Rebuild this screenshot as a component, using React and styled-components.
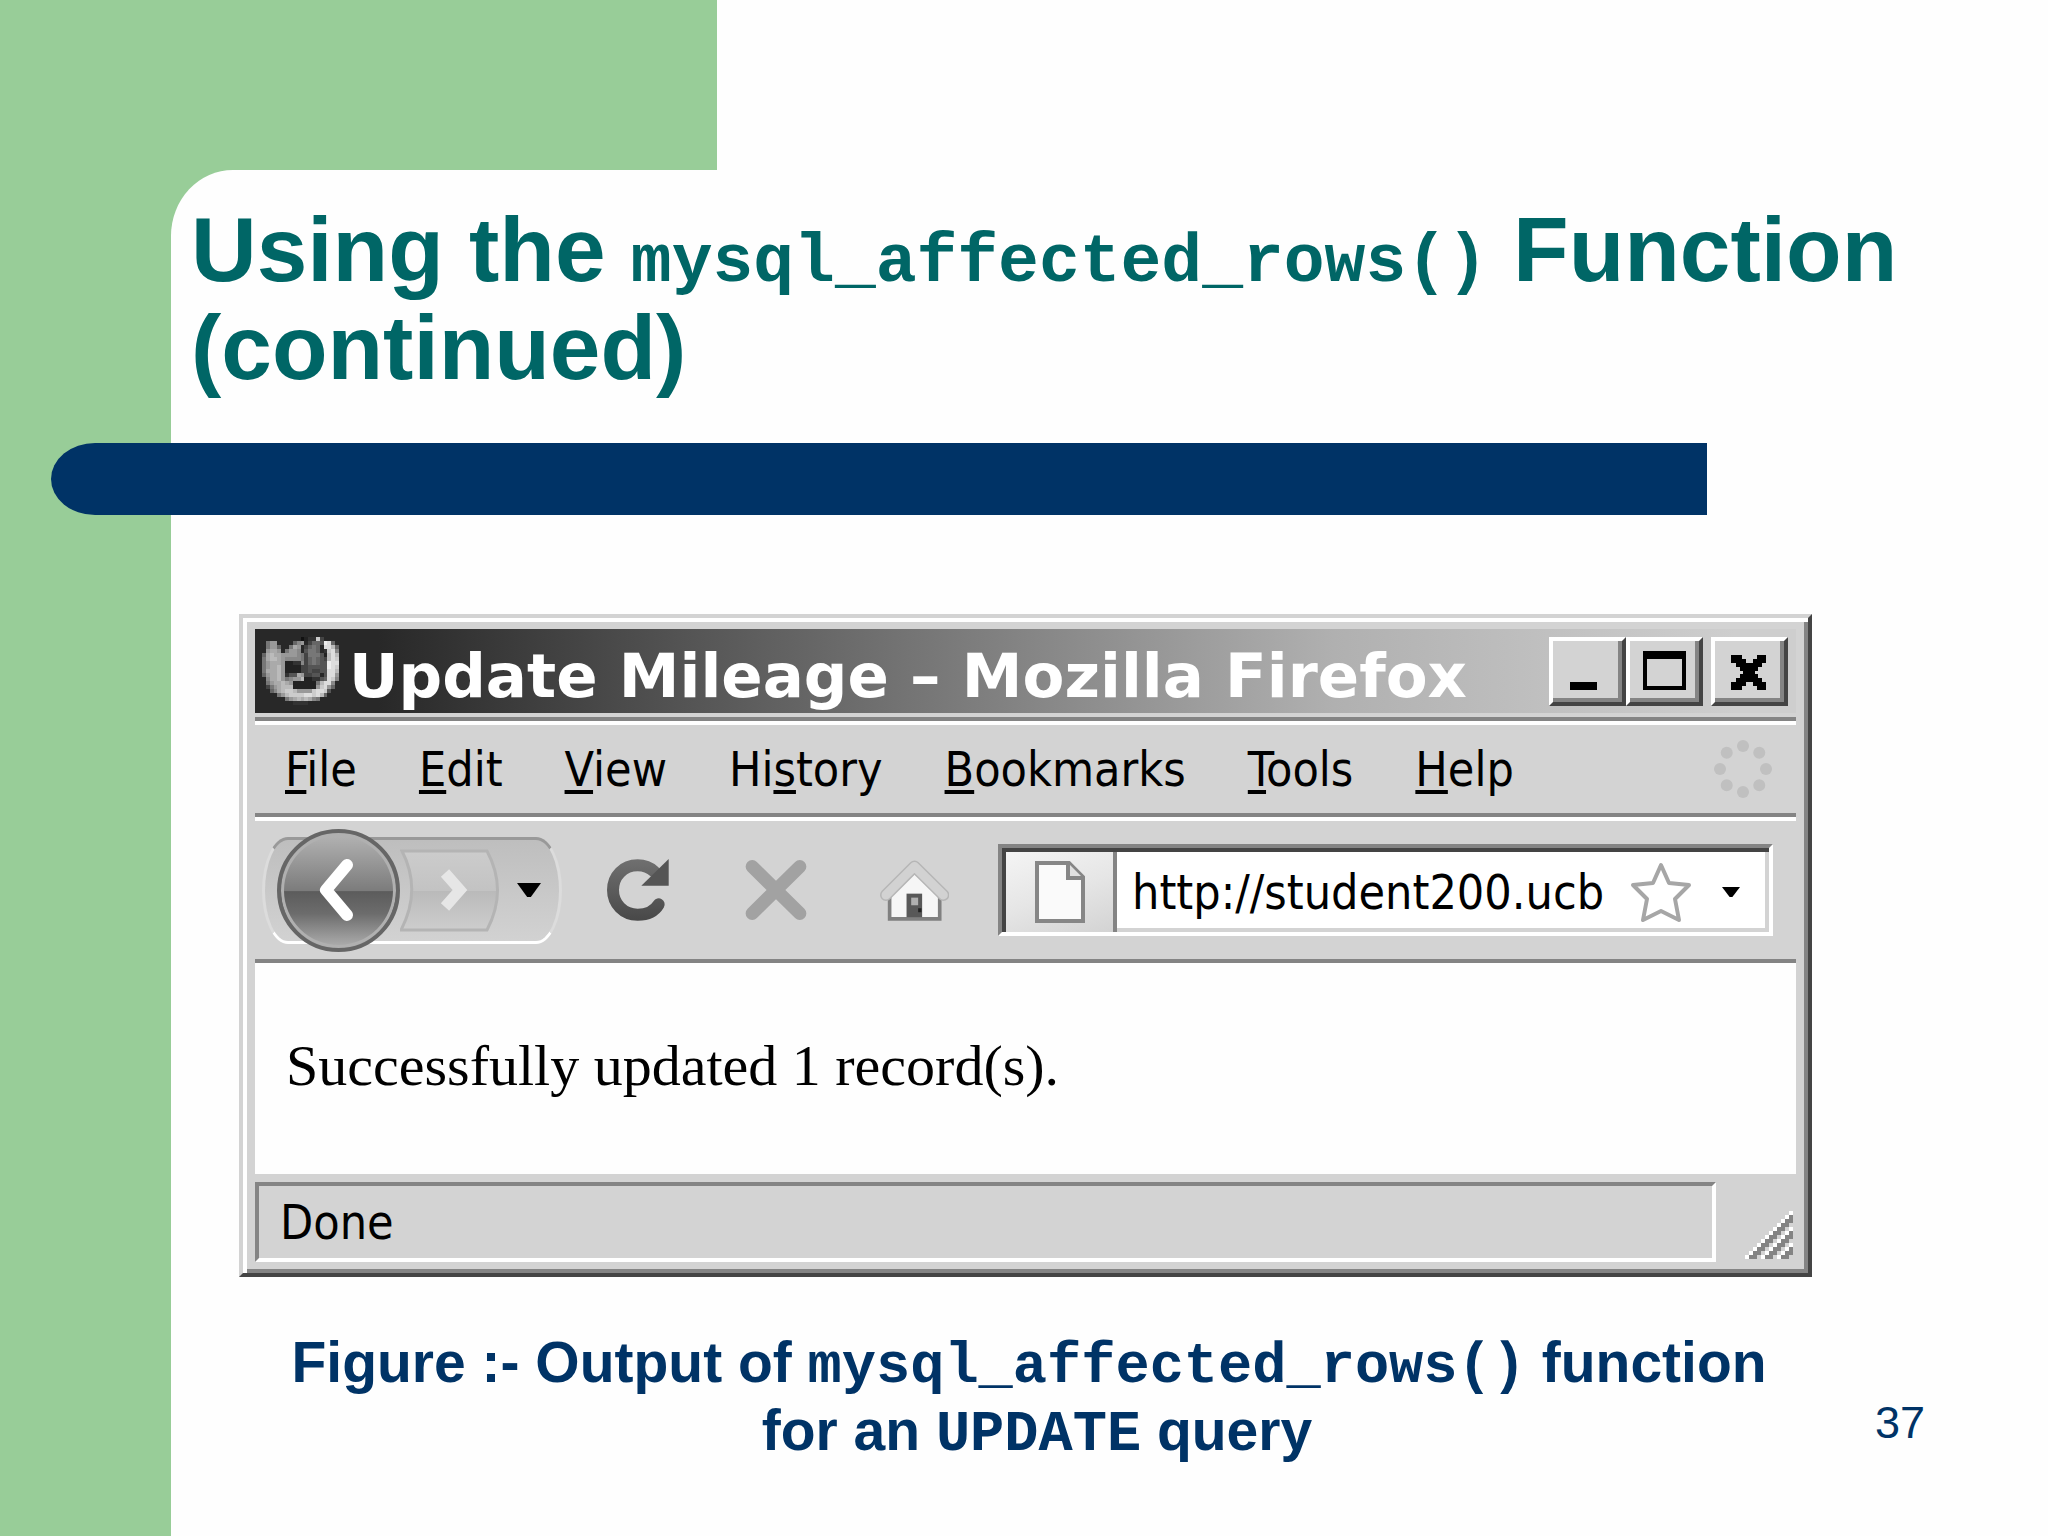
import React from "react"
import styled, { createGlobalStyle } from "styled-components"

const green = "#98cd98"
const navy = "#003366"
const teal = "#006666"
const face = "#d3d3d3"
const shade = "#848484"
const dark = "#444444"

const FIREFOX_PIXELS = [
  "..........1233c4....",
  ".799....689.4665ed6.",
  ".7996..7a9.4676.ddb6",
  ".9aa9.7998.5776.3cd8",
  "6abaa999987477752bdb",
  "7abba988887467654bdc",
  "79aaa922338467655edd",
  "79aab922224455555edc",
  "7aaab922224454455ddb",
  "69aab9355a94455.5dd9",
  ".8aab97899b223356dc8",
  ".79aaba92222227bdd8.",
  ".479abbb2222229cd96.",
  "..68abccb9999cddc5..",
  "....79bccccddcdb6...",
  "......79ababa87.....",
  "........3333........",
]

const MENU = [
  ["", "F", "ile"],
  ["", "E", "dit"],
  ["", "V", "iew"],
  ["Hi", "s", "tory"],
  ["", "B", "ookmarks"],
  ["", "T", "ools"],
  ["", "H", "elp"],
]

function FirefoxIcon() {
  return (
    <svg width="77" height="68" viewBox="0 0 20 17" preserveAspectRatio="none" shapeRendering="crispEdges">
      {FIREFOX_PIXELS.map((row, y) =>
        row.split("").map((c, x) =>
          c === "." ? null : (
            <rect key={`${x}-${y}`} x={x} y={y} width="1" height="1" fill={`#${c}${c}${c}`} />
          )
        )
      )}
    </svg>
  )
}

function MinimizeIcon() {
  return (
    <svg width="44" height="40" viewBox="0 0 44 40" shapeRendering="crispEdges">
      <rect x="4" y="31" width="27" height="8" />
    </svg>
  )
}

function MaximizeIcon() {
  return (
    <svg width="44" height="40" viewBox="0 0 44 40" shapeRendering="crispEdges">
      <path d="M0 0H43V39H0ZM4 8V35H39V8Z" fillRule="evenodd" />
    </svg>
  )
}

function CloseIcon() {
  return (
    <svg width="44" height="40" viewBox="0 0 44 40" shapeRendering="crispEdges">
      <path d="M3 4H14V8H18V12H25V8H29V4H38V12H34V16H30V20H27V23H30V27H34V31H38V39H29V35H25V31H18V35H14V39H3V31H8V27H12V23H15V20H12V16H8V12H3Z" />
    </svg>
  )
}

function Throbber() {
  const dots = [0, 1, 2, 3, 4, 5, 6, 7]
  return (
    <svg width="64" height="64" viewBox="-32 -32 64 64">
      {dots.map((i) => (
        <circle key={i} cx="0" cy="-23" r="6" fill="#c0c0c0" transform={`rotate(${i * 45})`} />
      ))}
    </svg>
  )
}

function BackArrow() {
  return (
    <svg width="40" height="64" viewBox="0 0 40 64">
      <path d="M28 7L7 32L28 57" fill="none" stroke="#fff" strokeWidth="12" strokeLinecap="round" strokeLinejoin="round" />
    </svg>
  )
}

function ForwardShape() {
  return (
    <svg width="100" height="83" viewBox="0 0 100 83">
      <defs>
        <linearGradient id="forward" x1="0" y1="0" x2="0" y2="1">
          <stop offset="0" stopColor="#cccccc" />
          <stop offset="0.5" stopColor="#c3c3c3" />
          <stop offset="0.51" stopColor="#bababa" />
          <stop offset="1" stopColor="#cdcdcd" />
        </linearGradient>
      </defs>
      <path d="M2 2H87Q108 41 87 81H1Q22 41 2 2Z" fill="url(#forward)" stroke="#b4b4b4" strokeWidth="3" />
      <path d="M45 24L60 41L45 58" fill="none" stroke="#e6e6e6" strokeWidth="11" />
    </svg>
  )
}

function ReloadIcon() {
  return (
    <svg width="62" height="62" viewBox="50 58 186 186">
      <defs>
        <linearGradient id="reload" x1="0" y1="58" x2="0" y2="243" gradientUnits="userSpaceOnUse">
          <stop offset="0" stopColor="#707070" />
          <stop offset="1" stopColor="#484848" />
        </linearGradient>
      </defs>
      <path d="M205 194C192 216 168 225 142 225C99 225 68 192 68 151C68 109 99 77 142 77C161 77 178 83 192 96" fill="none" stroke="url(#reload)" strokeWidth="36" strokeLinecap="round" />
      <path d="M235 58V138H153Z" fill="#555555" />
    </svg>
  )
}

function StopIcon() {
  return (
    <svg width="62" height="62" viewBox="464 58 188 186">
      <path d="M486 80L630 222M630 80L486 222" fill="none" stroke="#a2a2a2" strokeWidth="40" strokeLinecap="round" />
    </svg>
  )
}

function HomeIcon() {
  return (
    <svg width="69" height="62" viewBox="868 58 208 186">
      <path d="M897 160V238H1048V160L972 96Z" fill="#f6f6f6" stroke="#808080" strokeWidth="11" />
      <path d="M886 166L972 80L1059 166" fill="none" stroke="#b6b6b6" strokeWidth="36" strokeLinecap="round" strokeLinejoin="round" />
      <path d="M886 166L972 80L1059 166" fill="none" stroke="#d2d2d2" strokeWidth="27" strokeLinecap="round" strokeLinejoin="round" />
      <path d="M948 162H995V233H948Z" fill="#585858" />
      <path d="M962 174H983V197H962Z" fill="#b0b0b0" />
      <path d="M983 206H993V218H983Z" fill="#222222" />
    </svg>
  )
}

function PageIcon() {
  return (
    <svg width="50" height="62" viewBox="0 0 50 62">
      <path d="M2 2H34L48 16V60H2Z" fill="#fafafa" stroke="#868686" strokeWidth="4" />
      <path d="M33 2V17H48" fill="#e0e0e0" stroke="#868686" strokeWidth="4" />
    </svg>
  )
}

function StarIcon() {
  return (
    <svg width="64" height="64" viewBox="0 0 64 64">
      <path d="M32 5L40 23L60 25L46 39L50 60L32 51L14 60L18 39L4 25L24 23Z" fill="#fff" stroke="#a6a6a6" strokeWidth="4" strokeLinejoin="round" />
    </svg>
  )
}

function Triangle({ width, height }) {
  return (
    <svg width={width} height={height} viewBox="0 0 26 14" preserveAspectRatio="none">
      <path d="M0 0H26L15 14H11Z" />
    </svg>
  )
}

function ResizeGrip() {
  const cells = []
  for (let y = 0; y < 12; y++) {
    for (let x = 0; x < 12; x++) {
      const d = x + y - 11
      if (d < 0 || d > 10 || d % 4 === 3) continue
      cells.push(<rect key={`${x}-${y}`} x={x} y={y} width="1" height="1" fill={d % 4 === 0 ? "#fff" : shade} />)
    }
  }
  return (
    <svg width="48" height="48" viewBox="0 0 12 12" shapeRendering="crispEdges">
      {cells}
    </svg>
  )
}

export default function App() {
  return (
    <Slide>
      <GlobalStyle />
      <Header>
        <Title>
          Using the <Code $size={68}>mysql_affected_rows()</Code> Function (continued)
        </Title>
      </Header>
      <Rule />
      <Window>
        <TitleBar>
          <FirefoxIcon />
          <WindowTitle>Update Mileage – Mozilla Firefox</WindowTitle>
          <WindowButton aria-label="Minimize"><MinimizeIcon /></WindowButton>
          <WindowButton aria-label="Maximize"><MaximizeIcon /></WindowButton>
          <WindowButton aria-label="Close" $apart><CloseIcon /></WindowButton>
        </TitleBar>
        <MenuBar>
          {MENU.map(([before, key, after]) => (
            <MenuButton key={before + key + after}>
              {before}<AccessKey>{key}</AccessKey>{after}
            </MenuButton>
          ))}
          <Busy><Throbber /></Busy>
        </MenuBar>
        <Toolbar>
          <NavGroup>
            <BackButton aria-label="Back"><BackArrow /></BackButton>
            <PlainButton aria-label="Forward" $width={100}><ForwardShape /></PlainButton>
            <PlainButton aria-label="Recent pages" $width={58}><Triangle width={24} height={14} /></PlainButton>
          </NavGroup>
          <PlainButton aria-label="Reload" $width={138}><ReloadIcon /></PlainButton>
          <PlainButton aria-label="Stop" $width={138}><StopIcon /></PlainButton>
          <PlainButton aria-label="Home" $width={138}><HomeIcon /></PlainButton>
          <AddressBox>
            <SiteIcon><PageIcon /></SiteIcon>
            <Address aria-label="Address" defaultValue="http://student200.ucb" />
            <PlainButton aria-label="Bookmark this page" $width={64}><StarIcon /></PlainButton>
            <PlainButton aria-label="Show history" $width={76}><Triangle width={18} height={10} /></PlainButton>
          </AddressBox>
        </Toolbar>
        <Page>Successfully updated 1 record(s).</Page>
        <StatusBar>
          <Status>Done</Status>
          <Grip><ResizeGrip /></Grip>
        </StatusBar>
      </Window>
      <Footer>
        <Caption>
          Figure :- Output of <Code $size={57}>mysql_affected_rows()</Code> function&nbsp;
          <br />
          for an <Code $size={57}>UPDATE</Code> query
        </Caption>
        <PageNumber>37</PageNumber>
      </Footer>
    </Slide>
  )
}

const GlobalStyle = createGlobalStyle`
  * {
    box-sizing: border-box;
  }
  body {
    margin: 0;
    background: #fff;
  }
  svg {
    display: block;
    flex: none;
  }
`

const Slide = styled.main`
  min-height: 100vh;
  background: linear-gradient(to right, ${green} 171px, #fefefe 171px);
  font-family: "Liberation Sans", Arial, sans-serif;
`

const Header = styled.header`
  padding: 170px 0 0 171px;
  background: linear-gradient(to right, ${green} 35%, #fefefe 35%);
`

const Title = styled.h1`
  margin: 0;
  padding: 31px 120px 46px 20px;
  border-top-left-radius: 62px 66px;
  background: #fefefe;
  color: ${teal};
  font-size: 91px;
  line-height: 98px;
`

const Code = styled.code`
  font-family: "Liberation Mono", "Courier New", monospace;
  font-size: ${(p) => p.$size}px;
  line-height: 1;
`

const Rule = styled.div`
  height: 72px;
  margin: 0 341px 0 51px;
  border-radius: 44px 0 0 44px / 36px 0 0 36px;
  background: ${navy};
`

const Window = styled.section`
  margin: 99px 236px 0 239px;
  padding: 11px 12px;
  border: 4px solid;
  border-color: ${face} ${dark} ${dark} ${face};
  background: ${face};
  box-shadow: inset 4px 4px #fff, inset -4px -4px ${shade};
  color: #000;
  font-family: "DejaVu Sans Condensed", "DejaVu Sans", Tahoma, sans-serif;
  font-size: 48px;
`

const TitleBar = styled.div`
  display: flex;
  align-items: center;
  height: 84px;
  margin-bottom: 4px;
  padding: 0 8px 0 7px;
  background: linear-gradient(to right, #282828 8%, #737373 42%, #b0b0b0 70%, #cecece 96%);
`

const WindowTitle = styled.h2`
  flex: 1;
  margin: 0;
  padding: 8px 0 0 10px;
  color: #fff;
  font-family: "DejaVu Sans", Verdana, sans-serif;
  font-size: 61px;
  white-space: nowrap;
`

const Button = styled.button`
  display: flex;
  justify-content: center;
  align-items: center;
  flex: none;
  padding: 0;
  border: 0;
  background: none;
  color: #000;
  font: inherit;
`

const WindowButton = styled(Button)`
  width: 77px;
  height: 69px;
  margin-left: ${(p) => (p.$apart ? 8 : 0)}px;
  border: 4px solid;
  border-color: #fff ${dark} ${dark} #fff;
  background: ${face};
  box-shadow: inset -4px -4px ${shade};
`

const MenuBar = styled.nav`
  display: flex;
  align-items: center;
  gap: 62px;
  height: 96px;
  padding: 3px 21px 0 30px;
  border-top: 4px solid ${shade};
  box-shadow: inset 0 4px #fff;
`

const MenuButton = styled(Button)`
  display: block;
  white-space: nowrap;
`

const AccessKey = styled.span`
  text-decoration: underline;
  text-decoration-thickness: 4px;
  text-decoration-skip-ink: none;
  text-underline-offset: 4px;
`

const Busy = styled.div`
  margin-left: auto;
`

const Toolbar = styled.div`
  display: flex;
  align-items: center;
  height: 150px;
  padding: 4px 23px 0 7px;
  border-top: 4px solid ${shade};
  border-bottom: 4px solid ${shade};
  box-shadow: inset 0 4px #fff;
`

const NavGroup = styled.div`
  display: flex;
  align-items: center;
  width: 300px;
  height: 107px;
  margin-right: 7px;
  padding-left: 12px;
  border: 3px solid;
  border-color: #999 #dcdcdc #fff #dcdcdc;
  border-radius: 26px / 50%;
  background: linear-gradient(#bebebe, #d2d2d2);
`

const PlainButton = styled(Button)`
  width: ${(p) => p.$width}px;
`

const BackButton = styled(Button)`
  width: 123px;
  height: 123px;
  border: 4px solid #666;
  border-radius: 50%;
  background: linear-gradient(#b4b4b4, #7c7c7c 50%, #5c5c5c 51%, #6c6c6c 70%, #b0b0b0);
  box-shadow: inset 0 0 0 3px #b0b0b0;
`

const AddressBox = styled.div`
  display: flex;
  align-items: center;
  flex: 1;
  min-width: 0;
  height: 92px;
  margin-left: 15px;
  padding: 4px 0 0 4px;
  border: 4px solid;
  border-color: ${shade} #fff #fff ${shade};
  background: #fff;
  box-shadow: inset 4px 4px ${dark}, inset -4px -4px ${face};
`

const SiteIcon = styled.div`
  display: flex;
  justify-content: center;
  align-items: center;
  flex: none;
  width: 111px;
  height: 100%;
  border-right: 4px solid ${shade};
  background: linear-gradient(160deg, #f4f4f4, #e6e6e6 50%, #d3d3d3);
`

const Address = styled.input`
  flex: 1;
  min-width: 0;
  padding: 0 0 0 15px;
  border: 0;
  outline: 0;
  background: none;
  color: #000;
  font: inherit;
`

const Page = styled.div`
  padding: 71px 31px 76px;
  background: #fefefe;
  font-family: "Liberation Serif", "Times New Roman", serif;
  font-size: 58px;
  line-height: 64px;
`

const StatusBar = styled.div`
  display: flex;
  height: 80px;
  margin-top: 8px;
`

const Status = styled.div`
  display: flex;
  align-items: center;
  flex: 1;
  padding-left: 21px;
  border: 4px solid;
  border-color: ${shade} #fff #fff ${shade};
`

const Grip = styled.div`
  align-self: flex-end;
  padding: 0 3px 3px 29px;
`

const Footer = styled.footer`
  display: flex;
  align-items: flex-end;
  padding: 51px 123px 0 239px;
  color: ${navy};
`

const Caption = styled.p`
  flex: 1;
  margin: 0;
  font-size: 57px;
  font-weight: bold;
  line-height: 68px;
  text-align: center;
`

const PageNumber = styled.span`
  margin: 0 0 16px 40px;
  font-size: 45px;
  line-height: 50px;
`
